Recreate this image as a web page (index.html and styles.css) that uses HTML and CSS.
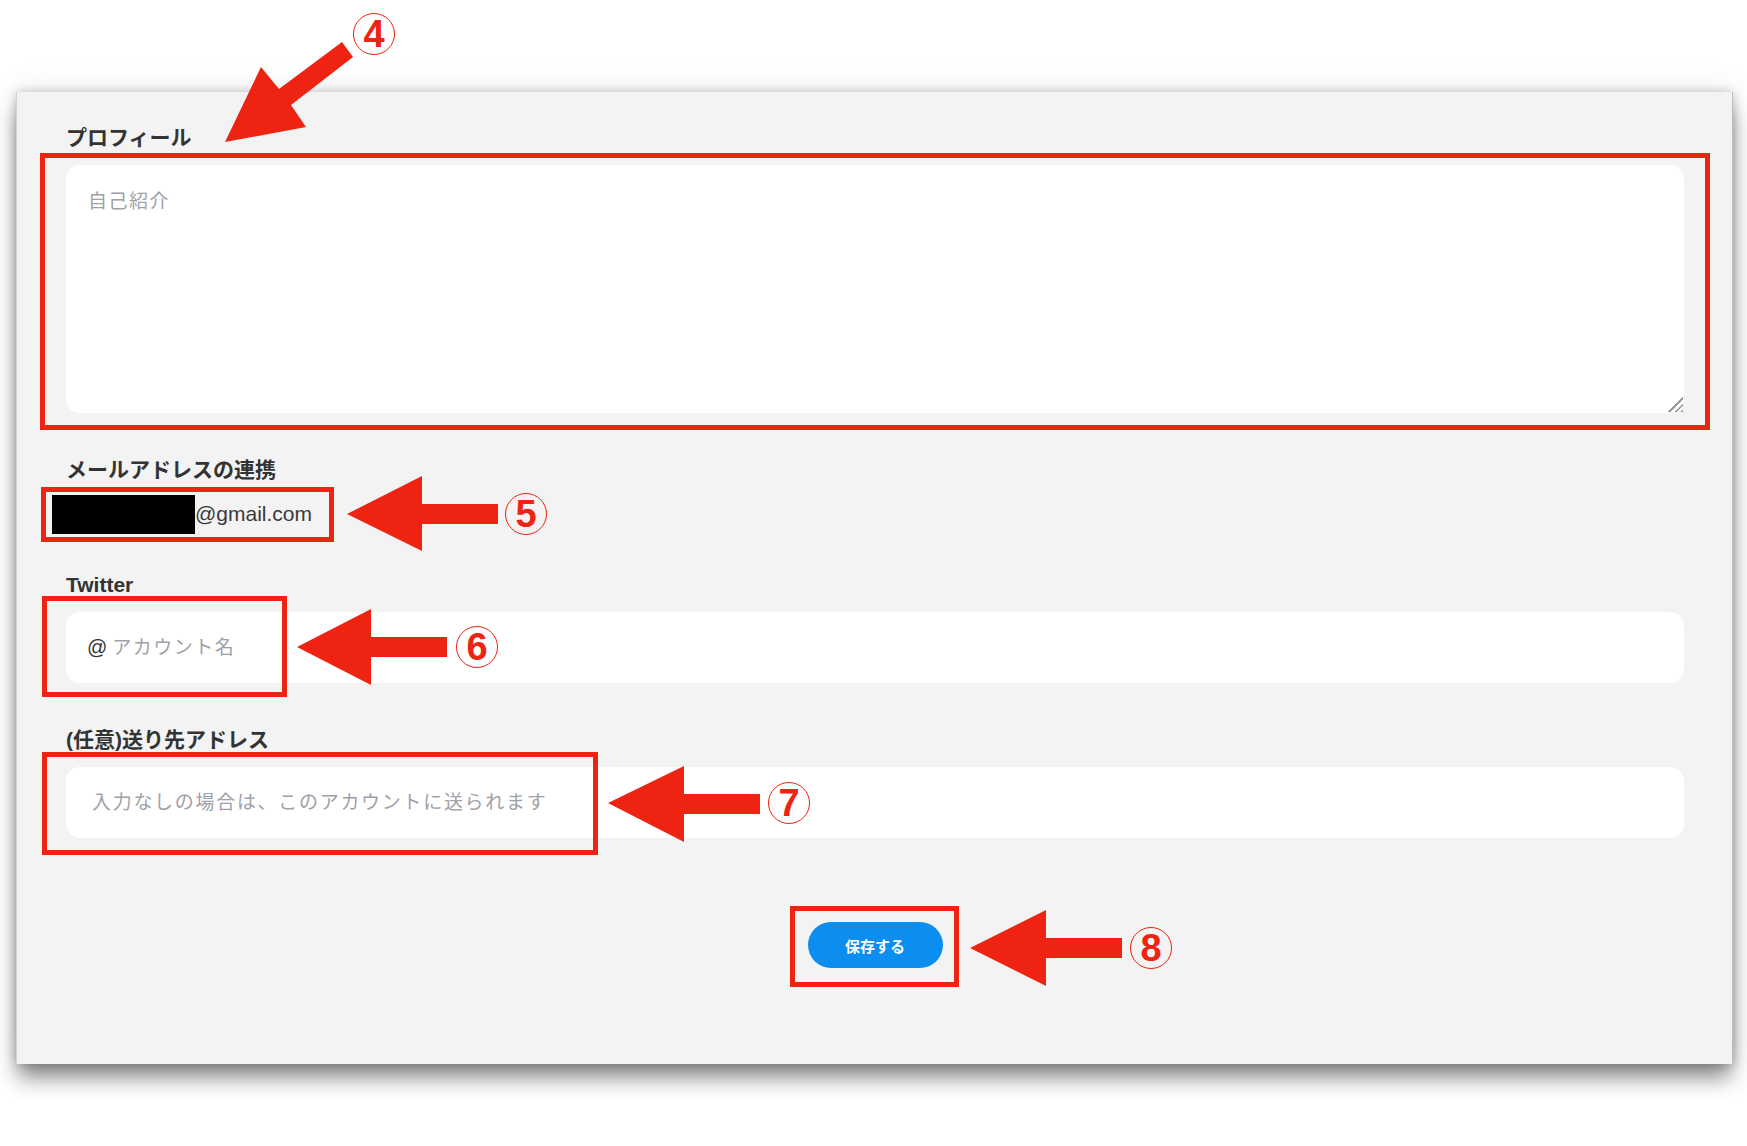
FILE: index.html
```html
<!DOCTYPE html>
<html lang="ja">
<head>
  <meta charset="UTF-8" />
  <meta name="viewport" content="width=device-width, initial-scale=1.0" />
  <title>プロフィール設定</title>
  <link rel="stylesheet" href="styles.css">
</head>
<body>

  <div class="stage">

    <div class="panel">
      <form class="settings-form">

        <!-- Profile -->
        <div class="form-group">
          <label for="profile">プロフィール</label>
          <div class="textarea-wrap">
            <textarea id="profile" placeholder="自己紹介"></textarea>
            <span class="grip"></span>
          </div>
        </div>

        <!-- Linked mail -->
        <div class="form-group mail">
          <label>メールアドレスの連携</label>
          <div class="mail-row"><span class="redacted"></span>@gmail.com</div>
        </div>

        <!-- Twitter -->
        <div class="form-group twitter">
          <label for="twitter">Twitter</label>
          <div class="input-group">
            <span class="prefix">@</span>
            <input type="text" id="twitter" placeholder="アカウント名" />
          </div>
        </div>

        <!-- Send to -->
        <div class="form-group">
          <label for="sendTo">(任意)送り先アドレス</label>
          <input type="text" id="sendTo" class="text-input" placeholder="入力なしの場合は、このアカウントに送られます" />
        </div>

        <div class="actions">
          <button type="button">保存する</button>
        </div>

      </form>
    </div>

    <!-- Annotations -->
    <svg class="arrows" width="1747" height="1146" viewBox="0 0 1747 1146">
      <polygon points="225,142 261,67 279,89 342,42 353,57 291,105 306,127" />
      <polygon points="347,514 422,476 422,504 498,504 498,524 422,524 422,551" />
      <polygon points="297,647 371,609 371,637 447,637 447,657 371,657 371,685" />
      <polygon points="608,803 684,766 684,794 760,794 760,814 684,814 684,842" />
      <polygon points="970,948 1046,910 1046,938 1122,938 1122,958 1046,958 1046,986" />
    </svg>

    <div class="mark mark-4"></div>
    <div class="mark mark-5"></div>
    <div class="mark mark-6"></div>
    <div class="mark mark-7"></div>
    <div class="mark mark-8"></div>

    <span class="num num-4">4</span>
    <span class="num num-5">5</span>
    <span class="num num-6">6</span>
    <span class="num num-7">7</span>
    <span class="num num-8">8</span>

  </div>

</body>
</html>
```

FILE: styles.css
```css
* {
  box-sizing: border-box;
  margin: 0;
  padding: 0;
}

html,
body {
  overflow: hidden;
}

body {
  background: #fff;
  font-family: "Liberation Sans", "Noto Sans CJK JP", sans-serif;
  color: #333;
}

.stage {
  position: relative;
  width: 1747px;
  height: 1146px;
  padding: 92px 0 0 16px;
}

.panel {
  width: 1717px;
  height: 972px;
  background: #f3f3f3;
  border-left: 1px solid #d2d2d2;
  border-right: 1px solid #bdbdbd;
  padding: 34px 48px 0 49px;
  box-shadow: 0 16px 20px -2px rgba(0, 0, 0, 0.45),
              0 -8px 28px rgba(0, 0, 0, 0.06),
              0 0 10px rgba(0, 0, 0, 0.2);
}

label {
  display: block;
  font-size: 21px;
  line-height: 24px;
  font-weight: bold;
  color: #333;
  margin-bottom: 15px;
}

.form-group + .form-group {
  margin-top: 45px;
}

.form-group.twitter {
  margin-top: 39px;
}

.textarea-wrap {
  position: relative;
}

textarea {
  display: block;
  width: 100%;
  height: 248px;
  border: none;
  border-radius: 14px;
  background: #fff;
  padding: 25px 22px;
  font-family: inherit;
  font-size: 19px;
  line-height: 24px;
  letter-spacing: 1.5px;
  outline: none;
  resize: none;
}

.grip {
  position: absolute;
  right: 1px;
  bottom: 1px;
  width: 16px;
  height: 16px;
  background: repeating-linear-gradient(135deg, transparent 0 3px, #9a9a9a 3px 4.5px);
  clip-path: polygon(100% 0, 100% 100%, 0 100%);
}

.mail label {
  margin-bottom: 12px;
}

.mail-row {
  display: flex;
  align-items: center;
  height: 40px;
  font-size: 21px;
  color: #3a3a3a;
}

.redacted {
  display: block;
  width: 143px;
  height: 39px;
  margin-left: -14px;
  background: #000;
}

.input-group {
  display: flex;
  align-items: center;
  height: 71px;
  background: #fff;
  border-radius: 14px;
  padding-left: 21px;
}

.prefix {
  font-size: 20px;
  color: #333;
  margin-right: 5px;
}

.input-group input {
  flex: 1;
  height: 100%;
  border: none;
  background: transparent;
  font-family: inherit;
  font-size: 19px;
  letter-spacing: 1.5px;
  outline: none;
}

.text-input {
  display: block;
  width: 100%;
  height: 71px;
  border: none;
  border-radius: 14px;
  background: #fff;
  padding: 0 26px;
  font-family: inherit;
  font-size: 19px;
  letter-spacing: 1.7px;
  outline: none;
}

::placeholder {
  color: #a0a0a8;
  opacity: 1;
}

.actions {
  display: flex;
  justify-content: center;
  margin-top: 84px;
}

button {
  width: 135px;
  height: 46px;
  border: none;
  border-radius: 23px;
  background: #0b8ef0;
  color: #fff;
  font-family: inherit;
  font-size: 15px;
  font-weight: bold;
  cursor: pointer;
}

/* annotations */

.arrows {
  position: absolute;
  left: 0;
  top: 0;
  pointer-events: none;
}

.arrows polygon {
  fill: #ee2312;
}

.mark {
  position: absolute;
  border: 5px solid #ee2312;
  pointer-events: none;
}

.mark-4 { left: 40px; top: 153px; width: 1670px; height: 277px; }
.mark-5 { left: 41px; top: 487px; width: 293px; height: 55px; }
.mark-6 { left: 42px; top: 596px; width: 245px; height: 101px; }
.mark-7 { left: 42px; top: 752px; width: 556px; height: 103px; }
.mark-8 { left: 790px; top: 906px; width: 169px; height: 81px; }

.num {
  position: absolute;
  display: flex;
  align-items: center;
  justify-content: center;
  width: 42px;
  height: 42px;
  border: 1.5px solid #ee2312;
  border-radius: 50%;
  color: #ee2312;
  font-family: "Liberation Sans", sans-serif;
  font-size: 38px;
  font-weight: bold;
  line-height: 1;
}

.num-4 { left: 353px; top: 13px; }
.num-5 { left: 505px; top: 493px; }
.num-6 { left: 456px; top: 626px; }
.num-7 { left: 768px; top: 782px; }
.num-8 { left: 1130px; top: 927px; }
```
